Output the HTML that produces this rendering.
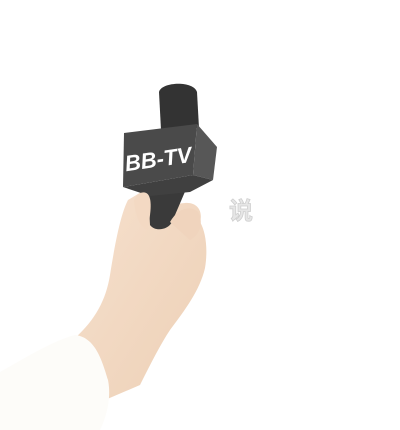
<!DOCTYPE html>
<html><head><meta charset="utf-8"><style>
html,body{margin:0;padding:0;background:#fff;width:400px;height:430px;overflow:hidden}
svg{display:block}
</style></head><body>
<svg width="400" height="430" viewBox="0 0 400 430">
<defs>
<linearGradient id="sk" x1="0" y1="0" x2="1" y2="1">
<stop offset="0" stop-color="#f6e0cd"/><stop offset="1" stop-color="#edd0b6"/>
</linearGradient>
</defs>
<path d="M138 194 C150 186 160 195 165 205 L185 203 C198 202 203 212 200 222 C206 232 208 250 205 268 C200 290 185 310 170 330 C160 345 150 365 140 385 L105 400 C100 380 90 355 75 338 C95 320 106 300 110 275 C114 250 120 215 128 200 Z" fill="url(#sk)"/>
<path d="M0 372 C30 355 55 340 75 335 C95 337 102 360 108 380 C112 400 105 420 100 430 L0 430 Z" fill="#fdfcf9"/>
<path d="M159 92 C161 82 193 80 197 92 L199 128 L161 130 Z" fill="#333"/>
<path d="M148 185 L190 180 L172 222 C168 230 155 232 150 225 Z" fill="#3a3a3a"/>
<path d="M124 133 L197 124 L193 175 L123 187 Z" fill="#4a4a4a"/>
<path d="M197 124 L217 147 L213 180 L193 175 Z" fill="#575757"/>
<path d="M123 187 L193 175 L213 180 L190 192 L150 196 Z" fill="#404040"/>
<text x="124" y="167" transform="rotate(-8 155 155)" font-family="Liberation Sans, sans-serif" font-weight="bold" font-style="italic" font-size="22" fill="#fff">BB-TV</text>
<path d="M138 194 C150 188 152 200 150 215 L148 230 C140 228 135 215 134 200 Z" fill="#f3d9c3"/>
<path d="M170 222 C178 208 190 205 198 212 C204 222 200 235 190 240 Z" fill="#f0d4bd"/>
<text x="229" y="219" font-family="Liberation Sans, 'Noto Sans CJK SC', sans-serif" font-weight="bold" font-size="24" fill="#e6e6e6" stroke="#cfcfcf" stroke-width="0.8">说</text>
</svg>
</body></html>
